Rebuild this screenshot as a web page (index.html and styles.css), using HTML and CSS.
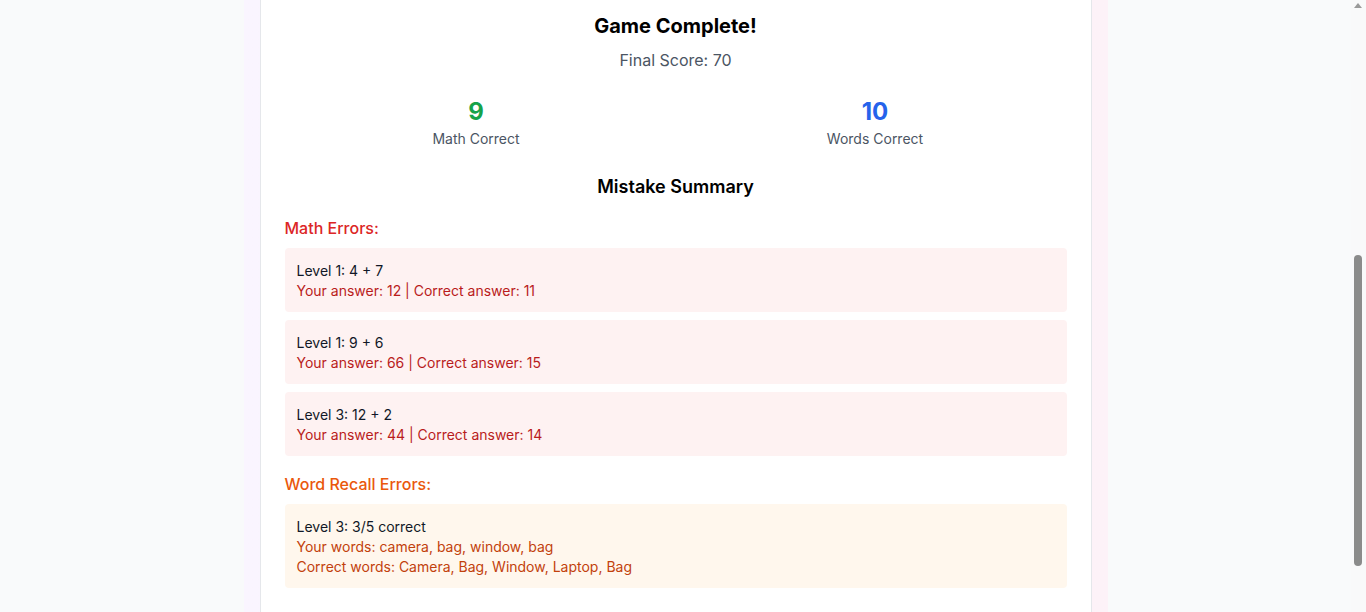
FILE: index.html
```html
<!DOCTYPE html>
<html lang="en">
<head>
<meta charset="utf-8">
<title>Math &amp; Memory Challenge</title>
<link rel="stylesheet" href="styles.css">
</head>
<body>
<div class="app">
  <main class="card result">
    <h2 class="result-title">Game Complete!</h2>
    <p class="result-score">Final Score: 70</p>

    <div class="stats">
      <div class="stat">
        <div class="stat-value stat-green">9</div>
        <div class="stat-label">Math Correct</div>
      </div>
      <div class="stat">
        <div class="stat-value stat-blue">10</div>
        <div class="stat-label">Words Correct</div>
      </div>
    </div>

    <h3 class="summary-title">Mistake Summary</h3>

    <section class="errors">
      <h4 class="errors-title errors-red">Math Errors:</h4>
      <div class="error-list">
        <div class="error error-red">
          <div class="error-q">Level 1: 4 + 7</div>
          <div class="error-detail">Your answer: 12 | Correct answer: 11</div>
        </div>
        <div class="error error-red">
          <div class="error-q">Level 1: 9 + 6</div>
          <div class="error-detail">Your answer: 66 | Correct answer: 15</div>
        </div>
        <div class="error error-red">
          <div class="error-q">Level 3: 12 + 2</div>
          <div class="error-detail">Your answer: 44 | Correct answer: 14</div>
        </div>
      </div>
    </section>

    <section class="errors">
      <h4 class="errors-title errors-orange">Word Recall Errors:</h4>
      <div class="error-list">
        <div class="error error-orange">
          <div class="error-q">Level 3: 3/5 correct</div>
          <div class="error-detail">Your words: camera, bag, window, bag</div>
          <div class="error-detail">Correct words: Camera, Bag, Window, Laptop, Bag</div>
        </div>
      </div>
    </section>
  </main>
</div>

<div class="scrollbar" aria-hidden="true">
  <div class="scrollbar-arrow"></div>
  <div class="scrollbar-thumb"></div>
</div>
<script src="script.js"></script>
</body>
</html>
```

FILE: styles.css
```css
html, body {
  margin: 0;
  padding: 0;
}

body {
  background: #f9fafb;
  font-family: Inter, "Noto Sans", "Liberation Sans", sans-serif;
  color: #111827;
  padding-right: 15px;
}

.app {
  box-sizing: border-box;
  max-width: 864px;
  margin: 0 auto;
  padding: 16px;
  background: linear-gradient(90deg, #faf5ff 0%, #fdf2f8 100%);
}

.card {
  background: #ffffff;
  border: 1px solid #e5e7eb;
  border-radius: 12px;
  padding: 24px;
}

.result-title {
  margin: 0 0 8px;
  text-align: center;
  font-size: 20px;
  line-height: 28px;
  font-weight: 700;
  color: #000000;
}

.result-score {
  margin: 0 0 24px;
  text-align: center;
  font-size: 16px;
  line-height: 24px;
  color: #4b5563;
}

.stats {
  display: grid;
  grid-template-columns: 1fr 1fr;
  gap: 16px;
  margin-bottom: 24px;
  text-align: center;
}

.stat-value {
  font-size: 24px;
  line-height: 32px;
  font-weight: 700;
}

.stat-green { color: #16a34a; }
.stat-blue { color: #2563eb; }

.stat-label {
  margin-top: 1px;
  font-size: 14px;
  line-height: 20px;
  color: #4b5563;
}

.summary-title {
  margin: 0 0 15px;
  text-align: center;
  font-size: 18px;
  line-height: 28px;
  font-weight: 600;
  color: #000000;
}

.errors {
  margin-bottom: 16px;
}

.errors-title {
  margin: 0 0 8px;
  font-size: 16px;
  line-height: 24px;
  font-weight: 500;
}

.errors-red { color: #dc2626; }
.errors-orange { color: #ea580c; }

.error-list {
  display: flex;
  flex-direction: column;
  gap: 8px;
}

.error {
  padding: 13px 12px 11px;
  border-radius: 4px;
  font-size: 14px;
  line-height: 20px;
}

.error-q { color: #111827; }

.error-red { background: #fef2f2; }
.error-red .error-detail { color: #b91c1c; }

.error-orange { background: #fff7ed; }
.error-orange .error-detail { color: #c2410c; }

/* browser scrollbar as seen in the capture */
.scrollbar {
  position: fixed;
  top: 0;
  right: 0;
  width: 15px;
  height: 100%;
  background: #f9f9fa;
}

.scrollbar-arrow {
  position: absolute;
  top: 3px;
  left: 3px;
  width: 0;
  height: 0;
  border-left: 4px solid transparent;
  border-right: 4px solid transparent;
  border-bottom: 5px solid #9a9a9a;
}

.scrollbar-thumb {
  position: absolute;
  top: 255px;
  left: 3px;
  width: 8px;
  height: 311px;
  border-radius: 4px;
  background: #8b8b8b;
}
```

FILE: script.js
```js
(function () {
  var card = document.querySelector('.result');
  var top = card.getBoundingClientRect().top + window.scrollY;
  window.scrollTo(0, top + 13);
})();
```
